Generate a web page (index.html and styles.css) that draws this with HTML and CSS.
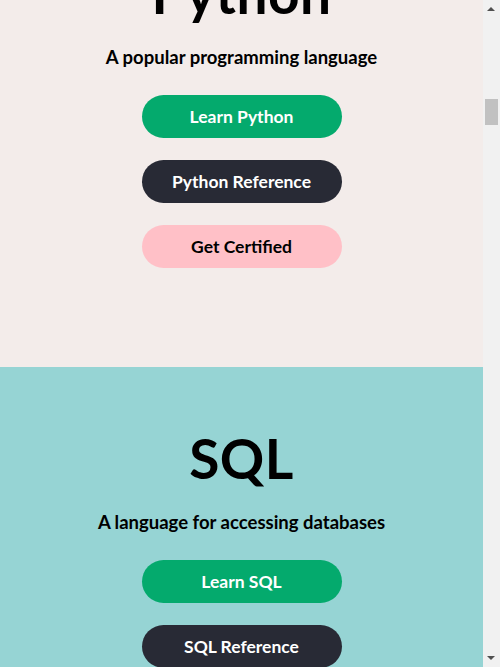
FILE: index.html
```html
<!DOCTYPE html>
<html lang="en">
<head>
<meta charset="utf-8">
<title>W3Schools Online Web Tutorials</title>
<link rel="stylesheet" href="styles.css">
</head>
<body>
<main class="page">
<div class="hero">
  <h1 class="hero-title">Learn to Code</h1>
  <p class="hero-sub">With the world's largest web developer site.</p>
</div>
<section class="section section-html">
  <h1 class="title">HTML</h1>
  <p class="subtitle">The language for building web pages</p>
  <div class="buttons">
    <a class="btn btn-green" href="#">Learn HTML</a>
    <a class="btn btn-dark" href="#">HTML Reference</a>
    <a class="btn btn-pink" href="#">Get Certified</a>
  </div>
</section>
<section class="section section-css">
  <h1 class="title">CSS</h1>
  <p class="subtitle">The language for styling web pages</p>
  <div class="buttons">
    <a class="btn btn-green" href="#">Learn CSS</a>
    <a class="btn btn-dark" href="#">CSS Reference</a>
    <a class="btn btn-pink" href="#">Get Certified</a>
  </div>
</section>
<section class="section section-js">
  <h1 class="title">JavaScript</h1>
  <p class="subtitle">The language for programming web pages</p>
  <div class="buttons">
    <a class="btn btn-green" href="#">Learn JavaScript</a>
    <a class="btn btn-light" href="#">JavaScript Reference</a>
    <a class="btn btn-pink" href="#">Get Certified</a>
  </div>
</section>
<section class="section section-python" id="python">
  <h1 class="title">Python</h1>
  <p class="subtitle">A popular programming language</p>
  <div class="buttons">
    <a class="btn btn-green" href="#">Learn Python</a>
    <a class="btn btn-dark" href="#">Python Reference</a>
    <a class="btn btn-pink" href="#">Get Certified</a>
  </div>
</section>
<section class="section section-sql">
  <h1 class="title">SQL</h1>
  <p class="subtitle">A language for accessing databases</p>
  <div class="buttons">
    <a class="btn btn-green" href="#">Learn SQL</a>
    <a class="btn btn-dark" href="#">SQL Reference</a>
    <a class="btn btn-pink" href="#">Get Certified</a>
  </div>
</section>
<section class="section section-php">
  <h1 class="title">PHP</h1>
  <p class="subtitle">A web server programming language</p>
  <div class="buttons">
    <a class="btn btn-green" href="#">Learn PHP</a>
    <a class="btn btn-dark" href="#">PHP Reference</a>
    <a class="btn btn-pink" href="#">Get Certified</a>
  </div>
</section>
</main>
<div class="scrollbar" aria-hidden="true">
  <span class="sb-arrow sb-up"></span>
  <span class="sb-thumb"></span>
  <span class="sb-arrow sb-down"></span>
</div>
<script src="script.js"></script>
</body>
</html>
```

FILE: styles.css
```css
html, body {
  margin: 0;
  padding: 0;
}
body {
  font-family: "Lato", "Noto Sans", sans-serif;
  color: #000;
  background: #f1f1f1;
}
.page {
  margin-right: 17px;
  min-height: 16200px;
  background: #fff;
}
.hero {
  height: 611px;
  background: #282a35;
  color: #fff;
  text-align: center;
  padding: 80px 16px 0;
  box-sizing: border-box;
}
.hero-title {
  margin: 0;
  font-size: 54px;
}
.hero-sub {
  font-size: 18px;
  color: #ffc0c7;
}
.section {
  box-sizing: border-box;
  height: 465px;
  padding: 58px 16px 0;
  text-align: center;
}
.section-html { background: #d9eee1; }
.section-css { background: #fff4a3; }
.section-js { background: #282a35; color: #fff; }
.section-python { background: #f3ecea; }
.section-sql { background: #96d4d4; }
.section-php { background: #f3ecea; }
.title {
  margin: 0;
  font-size: 55px;
  line-height: 66px;
  font-weight: 700;
  letter-spacing: 0.5px;
}
.subtitle {
  margin: 19px 0 0;
  font-size: 18.5px;
  line-height: 24px;
  font-weight: 700;
}
.buttons {
  margin-top: 26px;
  display: flex;
  flex-direction: column;
  align-items: center;
  gap: 22px;
}
.btn {
  display: flex;
  align-items: center;
  justify-content: center;
  width: 200px;
  height: 43px;
  border-radius: 25px;
  font-size: 17.5px;
  font-weight: 700;
  text-decoration: none;
}
.btn-green { background: #04aa6d; color: #fff; }
.btn-dark { background: #282a35; color: #fff; }
.btn-light { background: #fff; color: #000; }
.btn-pink { background: #ffc0c7; color: #000; }

.scrollbar {
  position: fixed;
  top: 0;
  right: 0;
  bottom: 0;
  width: 17px;
  background: #f1f1f1;
}
.sb-arrow {
  position: absolute;
  left: 4px;
  width: 0;
  height: 0;
  border-left: 4px solid transparent;
  border-right: 4px solid transparent;
}
.sb-up {
  top: 7px;
  border-bottom: 4px solid #505050;
}
.sb-down {
  bottom: 7px;
  border-top: 4px solid #505050;
}
.sb-thumb {
  position: absolute;
  top: 99px;
  left: 2px;
  width: 13px;
  height: 26px;
  background: #c1c1c1;
}
```

FILE: script.js
```js
window.scrollTo(0, document.getElementById('python').offsetTop + 98);
```
